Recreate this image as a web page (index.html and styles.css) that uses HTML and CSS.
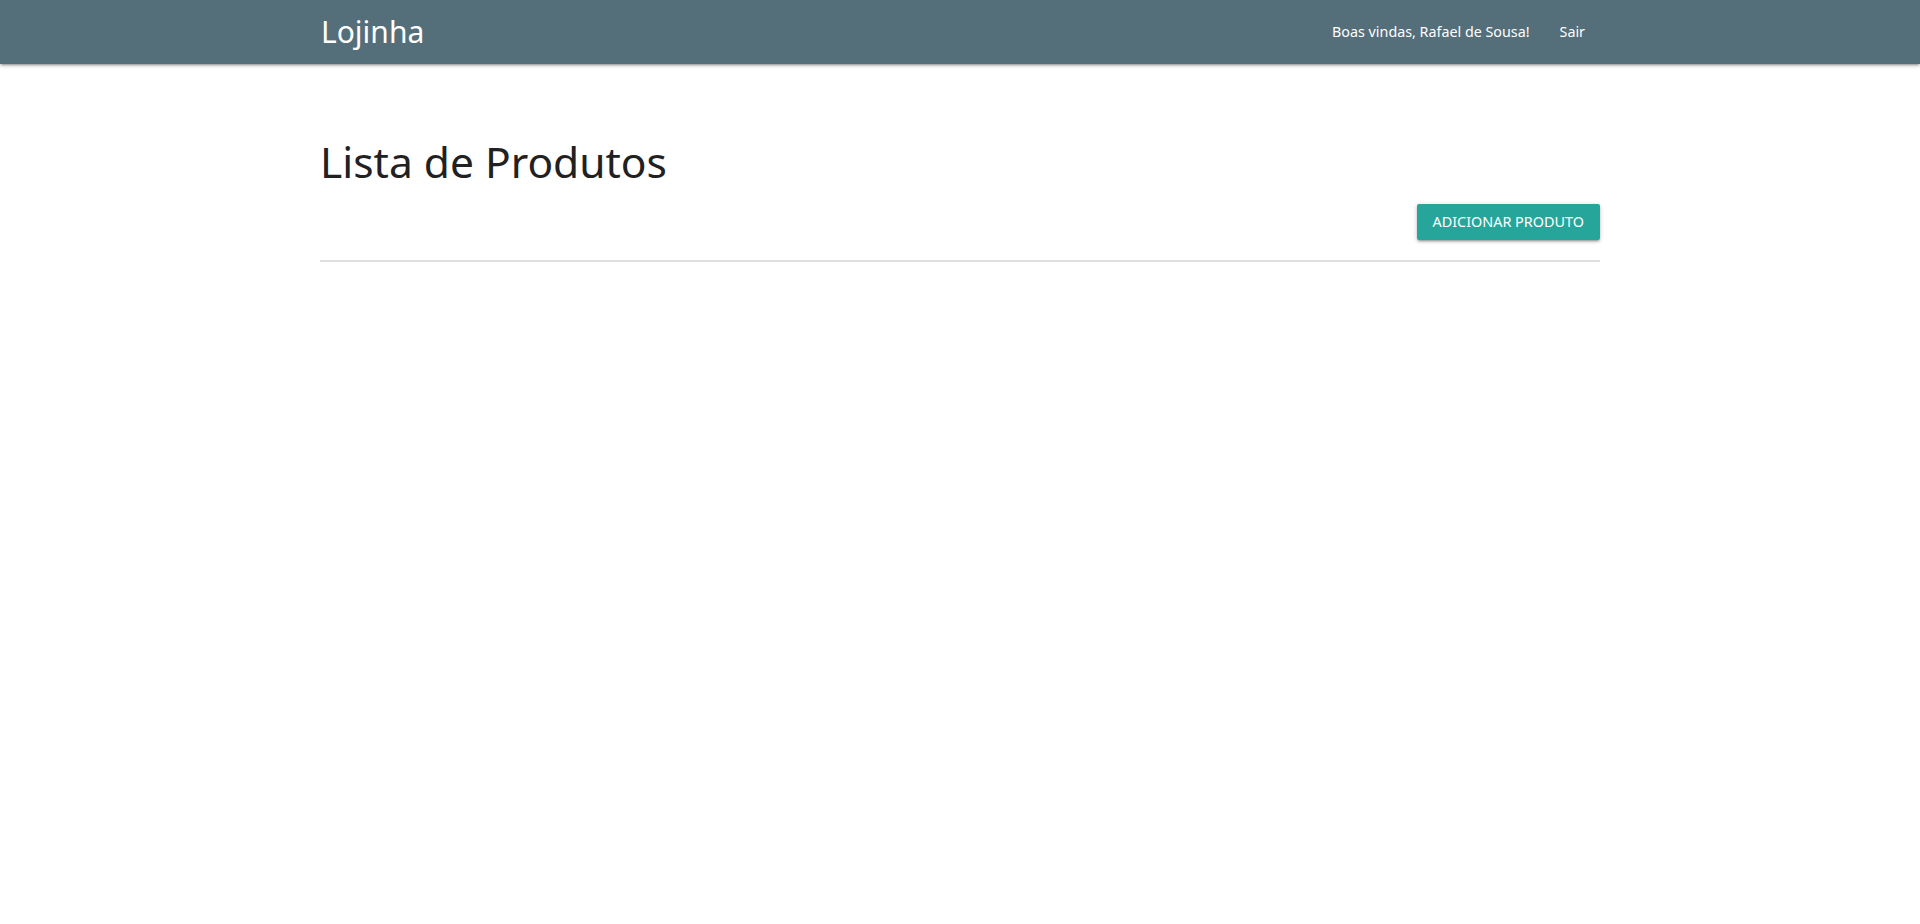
FILE: index.html
```html
<!DOCTYPE html>
<html lang="pt-BR">
<head>
<meta charset="utf-8">
<title>Lojinha</title>
<link rel="stylesheet" href="styles.css">
</head>
<body>
<nav class="navbar">
  <div class="container nav-inner">
    <a class="brand-logo" href="#">Lojinha</a>
    <ul class="nav-links">
      <li><a href="#">Boas vindas, Rafael de Sousa!</a></li>
      <li><a href="#">Sair</a></li>
    </ul>
  </div>
</nav>
<main class="container">
  <h1 class="page-title">Lista de Produtos</h1>
  <div class="actions">
    <a class="btn" href="#">Adicionar Produto</a>
  </div>
  <div class="divider"></div>
</main>
</body>
</html>
```
FILE: styles.css
```css
html, body {
  margin: 0;
  padding: 0;
  background: #fff;
  font-family: "Noto Sans", "Open Sans", sans-serif;
  color: rgba(0, 0, 0, 0.87);
}
.container {
  max-width: 1280px;
  width: 70%;
  margin: 0 auto;
}
.navbar {
  height: 64px;
  background: #546e7a;
  box-shadow: 0 2px 2px 0 rgba(0,0,0,.14), 0 3px 1px -2px rgba(0,0,0,.12), 0 1px 5px 0 rgba(0,0,0,.2);
}
.nav-inner {
  height: 64px;
  display: flex;
  align-items: center;
  justify-content: space-between;
}
.brand-logo {
  color: #fff;
  text-decoration: none;
  font-size: 30px;
  line-height: 64px;
  padding-left: 1px;
}
.nav-links {
  list-style: none;
  margin: 0;
  padding: 0;
  display: flex;
  height: 64px;
}
.nav-links a {
  display: block;
  color: #fff;
  text-decoration: none;
  font-size: 14.3px;
  line-height: 64px;
  padding: 0 15px;
}
.page-title {
  margin: 72px 0 0 0;
  font-size: 42.5px;
  font-weight: 400;
  line-height: 52px;
  color: #212121;
}
.actions {
  display: flex;
  justify-content: flex-end;
  margin-top: 16px;
}
.btn {
  display: inline-block;
  height: 36px;
  line-height: 36px;
  padding: 0 16px;
  background: #26a69a;
  color: #fff;
  text-decoration: none;
  text-transform: uppercase;
  font-size: 14.4px;
  border-radius: 2px;
  box-shadow: 0 2px 2px 0 rgba(0,0,0,.14), 0 3px 1px -2px rgba(0,0,0,.12), 0 1px 5px 0 rgba(0,0,0,.2);
}
.divider {
  margin-top: 20px;
  height: 2px;
  background: #e0e0e0;
}
```
